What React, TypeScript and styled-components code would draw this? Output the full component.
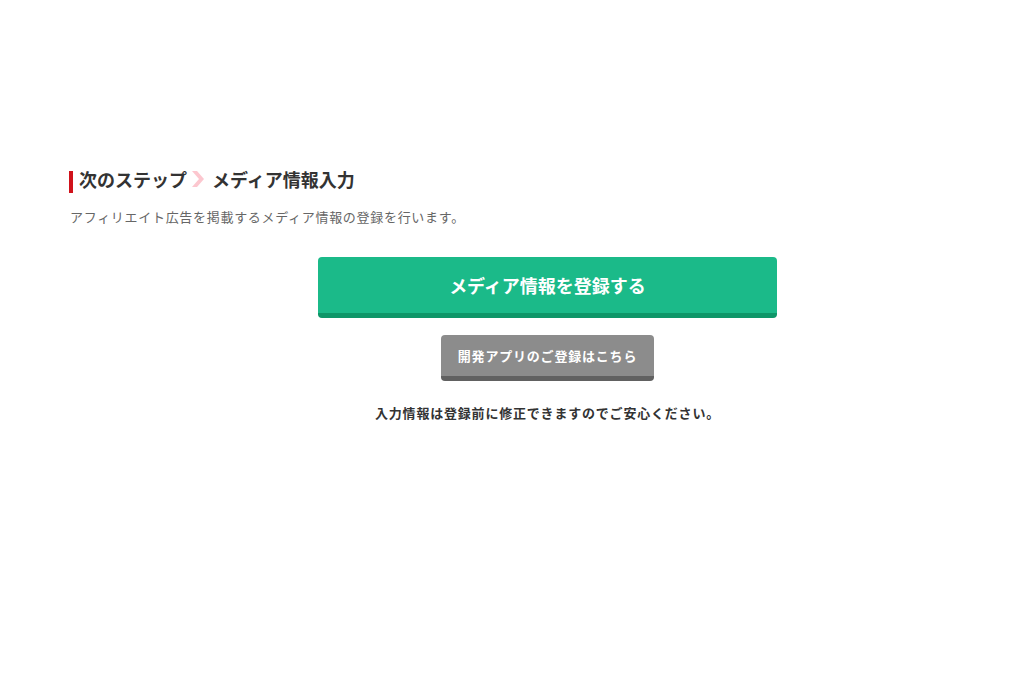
import styled, { createGlobalStyle } from "styled-components";

const GlobalStyle = createGlobalStyle`
  body {
    margin: 0;
    background: #ffffff;
    font-family: "Noto Sans CJK JP", "Noto Sans", sans-serif;
    color: #333333;
  }
`;

const Section = styled.section`
  width: 957px;
  margin-left: 69px;
  padding-top: 171px;
`;

const Heading = styled.h2`
  box-sizing: border-box;
  display: flex;
  align-items: center;
  margin: 0;
  padding: 0 0 6px 6px;
  border-left: 4px solid #d0121b;
  height: 22px;
  font-size: 18px;
  line-height: 18px;
  font-weight: 700;
  color: #333333;
`;

const Chevron = styled.svg`
  width: 14px;
  height: 18px;
  margin: 0 7px 0 4px;
`;

const Lead = styled.p`
  margin: 14px 0 0 1px;
  font-size: 13px;
  letter-spacing: 0.7px;
  color: #666666;
  line-height: 20px;
`;

const Actions = styled.div`
  display: flex;
  flex-direction: column;
  align-items: center;
  margin-top: 30px;
`;

const PrimaryButton = styled.button`
  width: 459px;
  height: 61px;
  border: none;
  border-bottom: 5px solid #0e9668;
  border-radius: 4px;
  background: #1bba89;
  color: #ffffff;
  font-family: inherit;
  font-size: 18px;
  font-weight: 700;
  cursor: pointer;
  padding: 0;
`;

const SecondaryButton = styled.button`
  margin-top: 17px;
  width: 213px;
  height: 46px;
  border: none;
  border-bottom: 5px solid #616161;
  border-radius: 4px;
  background: #8c8c8c;
  color: #ffffff;
  font-family: inherit;
  font-size: 13px;
  letter-spacing: 0.8px;
  font-weight: 700;
  cursor: pointer;
  padding: 0;
`;

const Note = styled.p`
  margin: 22px 0 0;
  font-size: 13px;
  letter-spacing: 0.8px;
  font-weight: 700;
  color: #333333;
`;

export default function App() {
  return (
    <>
      <GlobalStyle />
      <Section>
        <Heading>
          次のステップ
          <Chevron viewBox="0 0 14 18">
            <path d="M1 1h5l7 8-7 8H1l7-8z" fill="#fcc7cf" />
          </Chevron>
          メディア情報入力
        </Heading>
        <Lead>アフィリエイト広告を掲載するメディア情報の登録を行います。</Lead>
        <Actions>
          <PrimaryButton>メディア情報を登録する</PrimaryButton>
          <SecondaryButton>開発アプリのご登録はこちら</SecondaryButton>
          <Note>入力情報は登録前に修正できますのでご安心ください。</Note>
        </Actions>
      </Section>
    </>
  );
}
